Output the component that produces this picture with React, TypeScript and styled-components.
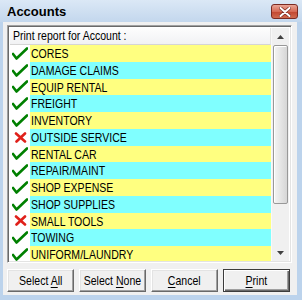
import React from "react";
import styled, { createGlobalStyle } from "styled-components";

const Global = createGlobalStyle`
  html, body { margin: 0; padding: 0; background: #fff; }
  #root { width: 302px; height: 300px; }
`;

const UI = `"Liberation Sans", Arial, sans-serif`;

const accounts = [
  { name: "CORES", on: true },
  { name: "DAMAGE CLAIMS", on: true },
  { name: "EQUIP RENTAL", on: true },
  { name: "FREIGHT", on: true },
  { name: "INVENTORY", on: true },
  { name: "OUTSIDE SERVICE", on: false },
  { name: "RENTAL CAR", on: true },
  { name: "REPAIR/MAINT", on: true },
  { name: "SHOP EXPENSE", on: true },
  { name: "SHOP SUPPLIES", on: true },
  { name: "SMALL TOOLS", on: false },
  { name: "TOWING", on: true },
  { name: "UNIFORM/LAUNDRY", on: true },
];

const Window = styled.div`
  width: 302px;
  height: 300px;
  box-sizing: border-box;
  background: #bcd3ec;
  display: flex;
  flex-direction: column;
  overflow: hidden;
`;

const TitleBar = styled.div`
  height: 22px;
  flex: none;
  display: flex;
  align-items: center;
  justify-content: space-between;
  padding: 0 4px 0 7px;
  background: linear-gradient(#dbe8f6, #c3d7ed);
`;

const Title = styled.div`
  font: bold 13px "Liberation Sans", Arial, sans-serif;
  color: #000;
  margin-top: 1px;
`;

const CloseBtn = styled.div`
  width: 27px;
  height: 15px;
  box-sizing: border-box;
  border: 1px solid #7a2a22;
  border-radius: 3px;
  background: linear-gradient(#e9a596, #d66a55 50%, #c2452f 51%, #d06a4f);
  display: flex;
  align-items: center;
  justify-content: center;
  margin-top: 1px;
`;

const Body = styled.div`
  flex: 1;
  margin: 0 5px 5px 3px;
  background: #f0f0f0;
  display: flex;
  flex-direction: column;
  padding: 3px 5px 3px 4px;
  box-sizing: border-box;
`;

const ListBox = styled.div`
  height: 238px;
  flex: none;
  box-sizing: border-box;
  border: 1px solid;
  border-color: #a0a0a0 #ffffff #ffffff #a0a0a0;
  box-shadow: inset 1px 1px 0 #696969, inset -1px -1px 0 #e3e3e3;
  padding: 2px 2px 1px 2px;
  display: flex;
  background: #fff;
  overflow: hidden;
`;

const ListMain = styled.div`
  flex: 1;
  display: flex;
  flex-direction: column;
  overflow: hidden;
`;

/* the dialog font is a narrow sans; squeeze Liberation Sans to its width */
const Narrow = styled.span<{ $origin?: string }>`
  display: inline-block;
  white-space: nowrap;
  transform: scaleX(0.81);
  transform-origin: ${(p) => p.$origin || "left"} center;
`;

const Header = styled.div`
  height: 17px;
  flex: none;
  box-sizing: border-box;
  background: linear-gradient(#fdfdfd, #f1f2f4);
  border-bottom: 1px solid #d5d5d5;
  border-right: 1px solid #e3e3e3;
  font: 13px ${UI};
  color: #000;
  padding-left: 3px;
  line-height: 16px;
`;

const Row = styled.div`
  height: 16.75px;
  flex: none;
  display: flex;
`;

const Mark = styled.div`
  width: 20px;
  flex: none;
  background: #fff;
  display: flex;
  align-items: center;
  justify-content: center;
`;

const Cell = styled.div<{ $alt: boolean }>`
  flex: 1;
  background: ${(p) => (p.$alt ? "#80ffff" : "#ffff80")};
  font: 13px ${UI};
  color: #000;
  line-height: 17px;
  padding-left: 1px;
  white-space: nowrap;
`;

const ScrollBar = styled.div`
  width: 17px;
  flex: none;
  background: #f0f0f0;
  display: flex;
  flex-direction: column;
  border-left: 1px solid #f8f8f8;
`;

const Arrow = styled.div`
  height: 17px;
  flex: none;
  display: flex;
  align-items: center;
  justify-content: center;
`;

const Thumb = styled.div`
  height: 159px;
  flex: none;
  margin: 0 1px 0 1px;
  box-sizing: border-box;
  border: 1px solid #989898;
  border-radius: 2px;
  background: linear-gradient(90deg, #f4f4f4, #e8e8e8 40%, #d6d6d6 100%);
  box-shadow: inset 1px 1px 0 #fff;
`;

const Track = styled.div`
  flex: 1;
`;

const Buttons = styled.div`
  margin-top: 6px;
  display: grid;
  grid-template-columns: repeat(4, 1fr);
  column-gap: 5px;
  padding-right: 2px;
`;

const Btn = styled.div<{ $default?: boolean }>`
  height: 23px;
  box-sizing: border-box;
  background: #f0f0f0;
  border: 1px solid;
  border-color: ${(p) => (p.$default ? "#3c3c3c" : "#ffffff #696969 #696969 #ffffff")};
  box-shadow: ${(p) =>
    p.$default
      ? "inset 1px 1px 0 #fff, inset -1px -1px 0 #696969, inset -2px -2px 0 #a0a0a0"
      : "inset -1px -1px 0 #a0a0a0, inset 1px 1px 0 #e3e3e3"};
  display: flex;
  align-items: center;
  justify-content: center;
  font: 13px ${UI};
  color: #000;
  padding-bottom: 1px;
  white-space: nowrap;
  overflow: hidden;
  u { text-decoration: underline; text-underline-offset: 2px; }
`;

const Check = () => (
  <svg width="16" height="13" viewBox="0 0 16 13">
    <path d="M1 7 L4.5 11.5 L15 1.5" fill="none" stroke="#008000" strokeWidth="2.6" strokeLinejoin="round" strokeLinecap="round" />
  </svg>
);

const Cross = () => (
  <svg width="13" height="11" viewBox="0 0 13 11">
    <path d="M2 1.5 L11 9.5 M11 1.5 L2.5 9.5" fill="none" stroke="#e0201a" strokeWidth="2.6" strokeLinecap="round" />
  </svg>
);

const Tri = ({ up }: { up?: boolean }) => (
  <svg width="7" height="4" viewBox="0 0 7 4">
    <path d={up ? "M3.5 0 L7 4 L0 4 Z" : "M0 0 L7 0 L3.5 4 Z"} fill="#404040" />
  </svg>
);

export default function App() {
  return (
    <>
      <Global />
      <Window>
        <TitleBar>
          <Title>Accounts</Title>
          <CloseBtn>
            <svg width="12" height="10" viewBox="0 0 12 10">
              <path d="M1.5 1 L10.5 9 M10.5 1 L1.5 9" stroke="#7a2a22" strokeWidth="3.4" strokeLinecap="round" />
              <path d="M1.5 1 L10.5 9 M10.5 1 L1.5 9" stroke="#fff" strokeWidth="2" strokeLinecap="round" />
            </svg>
          </CloseBtn>
        </TitleBar>
        <Body>
          <ListBox>
            <ListMain>
              <Header>
                <Narrow>Print report for Account :</Narrow>
              </Header>
              {accounts.map((a, i) => (
                <Row key={a.name}>
                  <Mark>{a.on ? <Check /> : <Cross />}</Mark>
                  <Cell $alt={i % 2 === 1}>
                    <Narrow>{a.name}</Narrow>
                  </Cell>
                </Row>
              ))}
            </ListMain>
            <ScrollBar>
              <Arrow>
                <Tri up />
              </Arrow>
              <Thumb />
              <Track />
              <Arrow>
                <Tri />
              </Arrow>
            </ScrollBar>
          </ListBox>
          <Buttons>
            <Btn>
              <Narrow $origin="center">
                Select <u>A</u>ll
              </Narrow>
            </Btn>
            <Btn>
              <Narrow $origin="center">
                Select <u>N</u>one
              </Narrow>
            </Btn>
            <Btn>
              <Narrow $origin="center">
                <u>C</u>ancel
              </Narrow>
            </Btn>
            <Btn $default>
              <Narrow $origin="center">
                <u>P</u>rint
              </Narrow>
            </Btn>
          </Buttons>
        </Body>
      </Window>
    </>
  );
}
